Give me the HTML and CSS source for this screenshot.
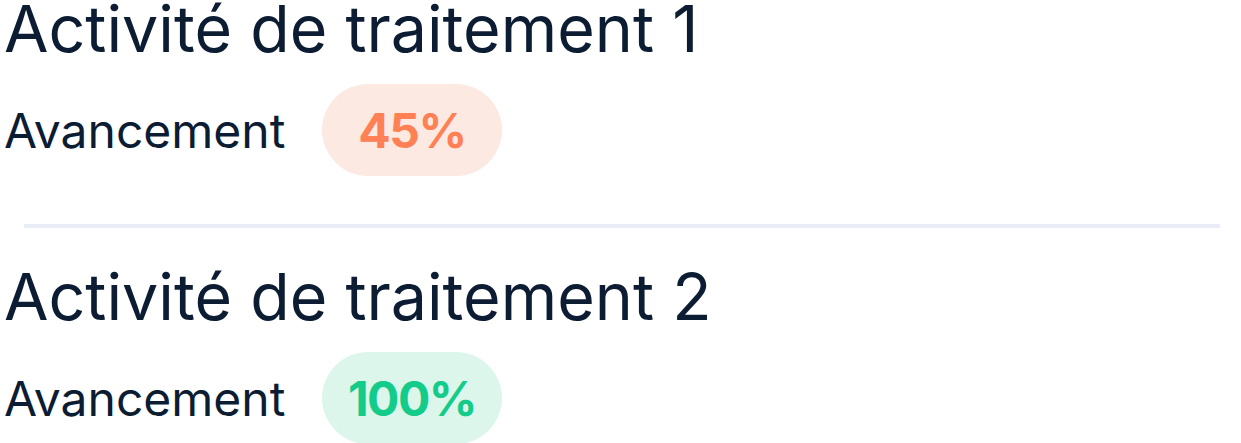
FILE: index.html
```html
<!DOCTYPE html>
<html lang="fr">
	<head>
		<meta charset="UTF-8">
		<link rel="stylesheet" href="styles.css">
		<title>Activités de traitement</title>
	</head>
	<body>
		<div class="list">
			<div class="activity">
				<h2 class="activity-title">Activité de traitement 1</h2>
				<div class="progress">
					<span class="progress-label">Avancement</span>
					<span class="badge badge-warn">45%</span>
				</div>
			</div>
			<hr class="divider">
			<div class="activity">
				<h2 class="activity-title">Activité de traitement 2</h2>
				<div class="progress">
					<span class="progress-label">Avancement</span>
					<span class="badge badge-done">100%</span>
				</div>
			</div>
		</div>
	</body>
</html>
```

FILE: styles.css
```css
body {
	margin: 0;
	background: #fff;
	font-family: 'Inter', 'Noto Sans', sans-serif;
	color: #0b1c33;
}
.list {
	padding: 0 21px 0 4px;
}
.activity-title {
	margin: 0 0 26px;
	font-size: 64.5px;
	font-weight: 400;
	line-height: 58px;
}
.progress {
	display: flex;
	align-items: center;
}
.progress-label {
	width: 318px;
	font-size: 48px;
	font-weight: 400;
}
.badge {
	display: flex;
	align-items: center;
	justify-content: center;
	width: 180px;
	height: 92px;
	border-radius: 46px;
	font-size: 48px;
	font-weight: 700;
	letter-spacing: -1.5px;
}
.badge-warn {
	background: #fce9e1;
	color: #ff8055;
}
.badge-done {
	background: #dcf6ec;
	color: #14cc8a;
}
.divider {
	margin: 48px 0 40px 20px;
	height: 4px;
	border: none;
	background: #e8edf8;
}
```
